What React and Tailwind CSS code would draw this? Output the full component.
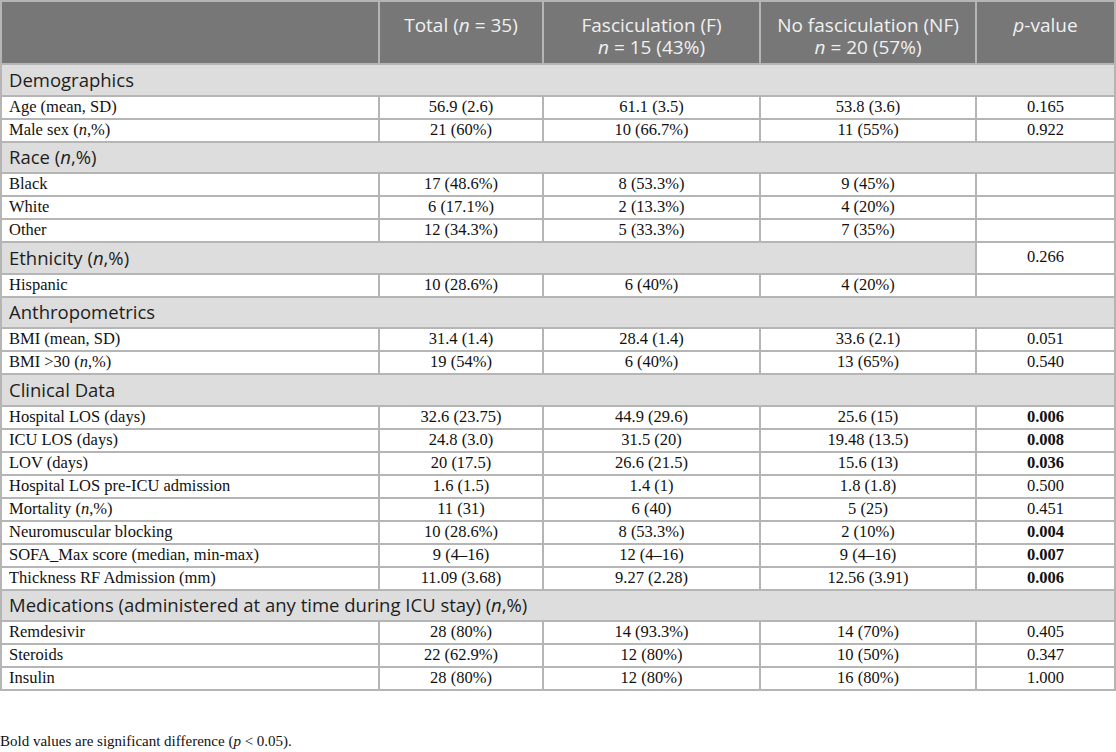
import React from "react";

const sections = [
  {
    title: "Demographics",
    rows: [
      ["Age (mean, SD)", "56.9 (2.6)", "61.1 (3.5)", "53.8 (3.6)", "0.165"],
      [<>Male sex (<i>n</i>,%)</>, "21 (60%)", "10 (66.7%)", "11 (55%)", "0.922"],
    ],
  },
  {
    title: <>Race (<i>n</i>,%)</>,
    rows: [
      ["Black", "17 (48.6%)", "8 (53.3%)", "9 (45%)", ""],
      ["White", "6 (17.1%)", "2 (13.3%)", "4 (20%)", ""],
      ["Other", "12 (34.3%)", "5 (33.3%)", "7 (35%)", ""],
    ],
  },
  {
    title: <>Ethnicity (<i>n</i>,%)</>,
    p: "0.266",
    rows: [["Hispanic", "10 (28.6%)", "6 (40%)", "4 (20%)", ""]],
  },
  {
    title: "Anthropometrics",
    rows: [
      ["BMI (mean, SD)", "31.4 (1.4)", "28.4 (1.4)", "33.6 (2.1)", "0.051"],
      [<>BMI &gt;30 (<i>n</i>,%)</>, "19 (54%)", "6 (40%)", "13 (65%)", "0.540"],
    ],
  },
  {
    title: "Clinical Data",
    rows: [
      ["Hospital LOS (days)", "32.6 (23.75)", "44.9 (29.6)", "25.6 (15)", "0.006", true],
      ["ICU LOS (days)", "24.8 (3.0)", "31.5 (20)", "19.48 (13.5)", "0.008", true],
      ["LOV (days)", "20 (17.5)", "26.6 (21.5)", "15.6 (13)", "0.036", true],
      ["Hospital LOS pre-ICU admission", "1.6 (1.5)", "1.4 (1)", "1.8 (1.8)", "0.500"],
      [<>Mortality (<i>n</i>,%)</>, "11 (31)", "6 (40)", "5 (25)", "0.451"],
      ["Neuromuscular blocking", "10 (28.6%)", "8 (53.3%)", "2 (10%)", "0.004", true],
      ["SOFA_Max score (median, min-max)", "9 (4–16)", "12 (4–16)", "9 (4–16)", "0.007", true],
      ["Thickness RF Admission (mm)", "11.09 (3.68)", "9.27 (2.28)", "12.56 (3.91)", "0.006", true],
    ],
  },
  {
    title: <>Medications (administered at any time during ICU stay) (<i>n</i>,%)</>,
    rows: [
      ["Remdesivir", "28 (80%)", "14 (93.3%)", "14 (70%)", "0.405"],
      ["Steroids", "22 (62.9%)", "12 (80%)", "10 (50%)", "0.347"],
      ["Insulin", "28 (80%)", "12 (80%)", "16 (80%)", "1.000"],
    ],
  },
];

const cell = "border-r-2 border-b-2 border-[#b5b5b5]";
const serif = { fontFamily: '"Liberation Serif", "Times New Roman", serif' };
const head = `${cell} bg-[#777777] h-[63px] flex flex-col items-center justify-start pt-[12px] text-[19px] text-[#f0f0f0] leading-[22px]`;

export default function App() {
  return (
    <div className="w-[1116px] h-[752px] bg-white overflow-hidden">
      <div
        className="grid grid-cols-[378px_164px_217px_216px_139px] border-l-2 border-t-2 border-[#b5b5b5]"
        style={{ fontFamily: '"Open Sans", "Noto Sans", sans-serif' }}
      >
        <div className={`${cell} bg-[#777777] h-[63px]`} />
        <div className={head}>
          <span>Total (<i>n</i> = 35)</span>
        </div>
        <div className={head}>
          <span>Fasciculation (F)</span>
          <span><i>n</i> = 15 (43%)</span>
        </div>
        <div className={head}>
          <span>No fasciculation (NF)</span>
          <span><i>n</i> = 20 (57%)</span>
        </div>
        <div className={head}>
          <span><i>p</i>-value</span>
        </div>

        {sections.map((s, si) => (
          <React.Fragment key={si}>
            <div
              className={`${cell} ${s.p ? "col-span-4" : "col-span-5"} bg-[#dddddd] h-[31.5px] flex items-center pl-[7px] text-[18.5px] text-[#1e1e1e]`}
            >
              <span>{s.title}</span>
            </div>
            {s.p && (
              <div className={`${cell} h-[31.5px] flex items-center justify-center text-[16.5px] text-[#111]`} style={serif}>
                {s.p}
              </div>
            )}
            {s.rows.map((r, ri) => (
              <React.Fragment key={ri}>
                <div className={`${cell} h-[23px] flex items-center pl-[7px] text-[16.5px] text-[#111]`} style={serif}>
                  <span>{r[0]}</span>
                </div>
                {[1, 2, 3, 4].map((c) => (
                  <div
                    key={c}
                    className={`${cell} h-[23px] flex items-center justify-center text-[16.5px] text-[#111] ${c === 4 && r[5] ? "font-bold" : ""}`}
                    style={serif}
                  >
                    {r[c]}
                  </div>
                ))}
              </React.Fragment>
            ))}
          </React.Fragment>
        ))}
      </div>
      <div className="mt-[39px] text-[15px] leading-[22px] text-[#111]" style={serif}>
        Bold values are significant difference (<i>p</i> &lt; 0.05).
      </div>
    </div>
  );
}
